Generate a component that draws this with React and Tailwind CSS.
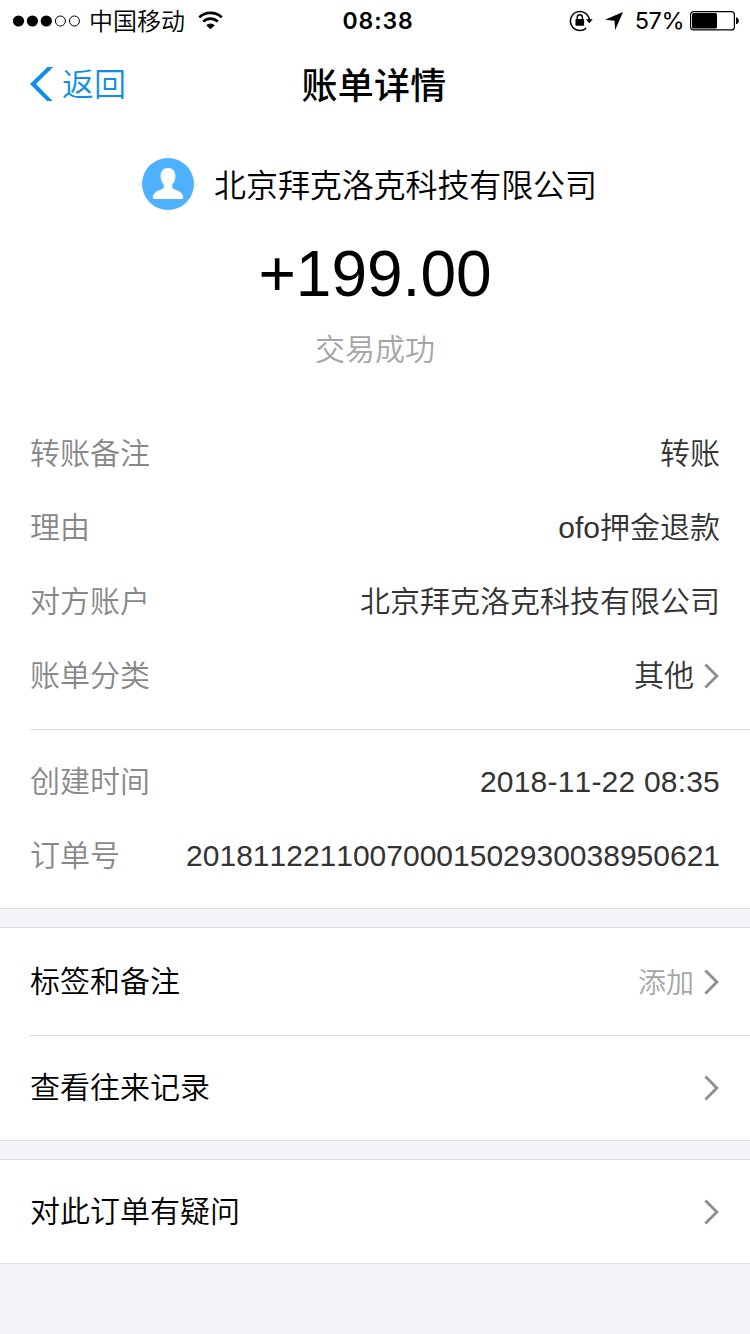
const FONT = 'font-["Liberation_Sans","Noto_Sans_CJK_SC",sans-serif]';
const CJK = 'font-["Noto_Sans_CJK_SC",sans-serif]';

function Chevron() {
  return (
    <svg className="ml-2.5 mr-px h-[26px] w-[15px]" viewBox="0 0 15 26" fill="none">
      <path d="M1.4 1.5 12.9 13 1.4 24.5" stroke="#8e8e8e" strokeWidth="2.8" />
    </svg>
  );
}

function StatusBar() {
  return (
    <header className="grid h-10 grid-cols-[1fr_auto_1fr] items-center pl-3 pr-[11px]">
      <div className="flex items-center">
        <svg className="h-3 w-[69px]" viewBox="0 0 69 12">
          <circle cx="6.5" cy="6" r="5.6" />
          <circle cx="20.4" cy="6" r="5.6" />
          <circle cx="34.3" cy="6" r="5.6" />
          <circle cx="48.4" cy="6" r="5" fill="none" stroke="#000" />
          <circle cx="62.4" cy="6" r="5" fill="none" stroke="#000" />
        </svg>
        <span className={`${CJK} -mt-px ml-2 text-[24px] leading-10`}>中国移动</span>
        <svg className="ml-[13px] h-[19px] w-[25px]" viewBox="0 0 25 19" fill="none" stroke="#000">
          <path d="M1.2 6.4a16.2 16.2 0 0 1 22.6 0" strokeWidth="2.7" />
          <path d="M5.2 10.6a10.4 10.4 0 0 1 14.6 0" strokeWidth="2.6" />
          <path d="M8.2 14.3a6.2 6.2 0 0 1 8.6 0L12.5 18.3Z" fill="#000" stroke="none" />
        </svg>
      </div>
      <time className="ml-[5px] pt-px font-[Inter,sans-serif] text-[23px] font-semibold leading-10 tracking-[0.9px]">08:38</time>
      <div className="flex items-center justify-end">
        <svg className="h-[22px] w-6" viewBox="0 0 24 22" fill="none">
          <path d="M17.2 18.1A9.5 9.5 0 1 1 20.4 10" stroke="#000" strokeWidth="1.5" />
          <path d="M16.8 9.3h6.9l-3.4 4Z" fill="#000" />
          <rect x="6.5" y="9" width="8.6" height="6.7" rx=".7" fill="#000" />
          <path d="M8.2 9.5V7.4a2.6 2.6 0 0 1 5.2 0v2.1" stroke="#000" strokeWidth="1.4" />
        </svg>
        <svg className="ml-3 h-[18px] w-[18px]" viewBox="0 0 18 18">
          <path d="M18 0 10.2 18 9.5 8.7 0 7.7Z" />
        </svg>
        <span className="ml-[12px] pt-px font-[Inter,sans-serif] text-[23.5px] font-normal leading-10 tracking-[-0.5px]">57%</span>
        <svg className="ml-[6px] mt-px h-5 w-[49px]" viewBox="0 0 49 20">
          <rect x=".6" y=".6" width="43.8" height="18.3" rx="3" fill="none" stroke="#000" strokeWidth="1.2" />
          <rect x="2" y="2" width="25" height="15.5" rx="1.5" />
          <path d="M46 6.3c3.8 1 3.8 6 0 7Z" />
        </svg>
      </div>
    </header>
  );
}

function NavBar() {
  return (
    <nav className={`${CJK} grid h-[88px] grid-cols-[1fr_auto_1fr] items-center px-[30px]`}>
      <button className="flex items-center text-[#108ee9]">
        <svg className="h-[34px] w-[23px]" viewBox="0 0 23 34">
          <path d="M17.5 0H23.2L6 17 22.6 34H17L0 17Z" fill="currentColor" />
        </svg>
        <span className="-mt-1 ml-[9px] text-[32px] leading-[46px]">返回</span>
      </button>
      <h1 className="-ml-[2px] -mt-[3px] text-[36px] font-medium leading-[52px] tracking-[0.3px]">账单详情</h1>
    </nav>
  );
}

function Detail({ label, value, arrow, valueClass = '' }) {
  return (
    <div className="flex h-[74px] items-center justify-between">
      <span className="text-[#888888]">{label}</span>
      <span className={`flex items-center text-[#333333] ${valueClass}`}>
        {value}
        {arrow && <Chevron />}
      </span>
    </div>
  );
}

function Action({ label, hint, className }) {
  return (
    <div className={`flex items-center justify-between pr-[30px] ${className}`}>
      <span>{label}</span>
      <span className="flex items-center text-[28px] text-[#a5a5a5]">
        <span className="pt-1">{hint}</span>
        <Chevron />
      </span>
    </div>
  );
}

export default function App() {
  return (
    <div className={`${FONT} flex h-[1334px] w-[750px] flex-col bg-[#f4f4f9] text-[30px] font-[350] leading-[44px] text-black [font-kerning:none]`}>
      <div className="border-b border-[#dddddd] bg-white">
        <StatusBar />
        <NavBar />
        <section className="flex h-[289px] flex-col items-center pt-[30px]">
          <div className="-ml-[11px] flex items-center">
            <svg className="h-[52px] w-[52px]" viewBox="0 0 52 52">
              <circle cx="26" cy="26" r="26" fill="#4db1ff" />
              <path
                d="M26 10c-5 0-7.4 3.4-7.4 8 0 4 1.3 6.7 3.2 8.6v2.2c0 1.2-.6 1.8-2 2.4-4.500 1.700-9 3.300-9 8.300 0 .9.500 1.500 1.400 1.500h27.600c.9 0 1.400-.6 1.400-1.500 0-5-4.500-6.600-9-8.300-1.400-.6-2-1.200-2-2.400v-2.200c1.900-1.900 3.200-4.600 3.200-8.600 0-4.600-2.400-8-7.400-8Z"
                fill="#fff"
              />
            </svg>
            <span className={`${CJK} -mt-[3px] ml-5 text-[32px] leading-[46px] tracking-[-0.1px]`}>北京拜克洛克科技有限公司</span>
          </div>
          <strong className="mt-[27px] text-[64px] font-normal leading-[74px]">+199.00</strong>
          <span className="mt-[17px] text-[#a5a5a5]">交易成功</span>
        </section>
        <section className="ml-[30px] border-b border-[#dddddd] pb-4 pr-[30px]">
          <Detail label="转账备注" value="转账" />
          <Detail label="理由" value="ofo押金退款" />
          <Detail label="对方账户" value="北京拜克洛克科技有限公司" />
          <Detail label="账单分类" value="其他" arrow />
        </section>
        <section className="px-[30px] pb-[15px] pt-[15px]">
          <Detail label="创建时间" value="2018-11-22 08:35" valueClass="tracking-[0.2px]" />
          <Detail label="订单号" value="20181122110070001502930038950621" />
        </section>
      </div>
      <section className="mt-[18px] border-y border-[#dddddd] bg-white pl-[30px]">
        <Action label="标签和备注" hint="添加" className="h-[108px] border-b border-[#dddddd]" />
        <Action label="查看往来记录" className="h-[104px]" />
      </section>
      <section className="mt-[18px] border-y border-[#dddddd] bg-white pl-[30px]">
        <Action label="对此订单有疑问" className="h-[103px]" />
      </section>
    </div>
  );
}
